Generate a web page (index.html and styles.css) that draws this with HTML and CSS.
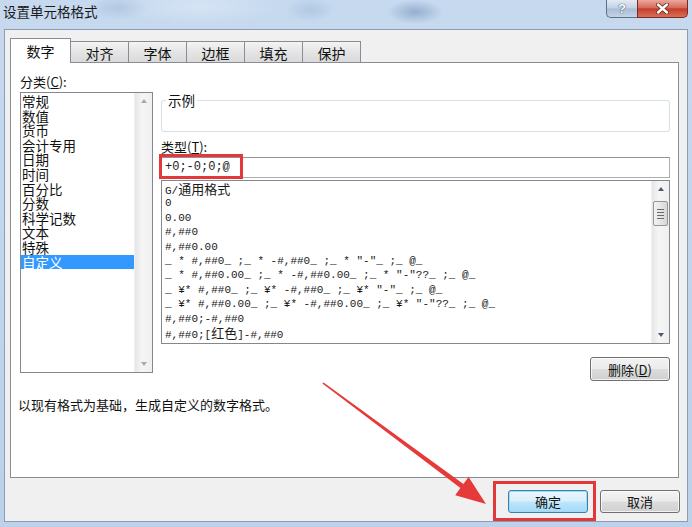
FILE: index.html
```html
<!DOCTYPE html>
<html lang="zh-CN">
<head>
  <meta charset="UTF-8" />
  <title>设置单元格格式</title>
  <link rel="stylesheet" href="styles.css">
</head>
<body>
  <div class="window">
    <div class="titlebar">
      <span class="title">设置单元格格式</span>
      <div class="caption">
        <div class="cap-btn cap-help">?</div>
        <div class="cap-btn cap-close">
          <svg width="13" height="11" viewBox="0 0 13 11">
            <path d="M2 1.5 L11 9.5 M11 1.5 L2 9.5" stroke="#6b231b" stroke-width="4" stroke-linecap="round"/>
            <path d="M2 1.5 L11 9.5 M11 1.5 L2 9.5" stroke="#fff" stroke-width="2.4" stroke-linecap="round"/>
          </svg>
        </div>
      </div>
    </div>

    <div class="client">
      <div class="tabs">
        <div class="tab active">数字</div>
        <div class="tab">对齐</div>
        <div class="tab">字体</div>
        <div class="tab">边框</div>
        <div class="tab">填充</div>
        <div class="tab">保护</div>
      </div>

      <div class="panel">
        <div class="panel-main">
          <div class="col-left">
            <div class="label">分类(<u>C</u>):</div>
            <div class="listbox cat-list">
              <div class="items">
                <div class="item">常规</div>
                <div class="item">数值</div>
                <div class="item">货币</div>
                <div class="item">会计专用</div>
                <div class="item">日期</div>
                <div class="item">时间</div>
                <div class="item">百分比</div>
                <div class="item">分数</div>
                <div class="item">科学记数</div>
                <div class="item">文本</div>
                <div class="item">特殊</div>
                <div class="item selected">自定义</div>
              </div>
              <div class="vscroll disabled">
                <span class="arr arr-up"></span>
                <span class="arr arr-down"></span>
              </div>
            </div>
          </div>

          <div class="col-right">
            <div class="sample">
              <span class="sample-label">示例</span>
            </div>
            <div class="label type-label">类型(<u>T</u>):</div>
            <div class="type-field">
              <div class="type-input">+0;-0;0;@</div>
              <span class="mark mark-type"></span>
            </div>
            <div class="listbox fmt-list">
              <div class="items">
                <div class="fmt">G/<span class="cjk">通用格式</span></div>
                <div class="fmt">0</div>
                <div class="fmt">0.00</div>
                <div class="fmt">#,##0</div>
                <div class="fmt">#,##0.00</div>
                <div class="fmt">_ * #,##0_ ;_ * -#,##0_ ;_ * "-"_ ;_ @_</div>
                <div class="fmt">_ * #,##0.00_ ;_ * -#,##0.00_ ;_ * "-"??_ ;_ @_</div>
                <div class="fmt">_ ¥* #,##0_ ;_ ¥* -#,##0_ ;_ ¥* "-"_ ;_ @_</div>
                <div class="fmt">_ ¥* #,##0.00_ ;_ ¥* -#,##0.00_ ;_ ¥* "-"??_ ;_ @_</div>
                <div class="fmt">#,##0;-#,##0</div>
                <div class="fmt">#,##0;[<span class="cjk">红色</span>]-#,##0</div>
              </div>
              <div class="vscroll">
                <span class="arr arr-up"></span>
                <span class="thumb"><i></i><i></i><i></i><i></i></span>
                <span class="track"></span>
                <span class="arr arr-down"></span>
              </div>
            </div>
            <div class="del-row">
              <button class="btn">删除(<u>D</u>)</button>
            </div>
          </div>
        </div>
        <p class="hint">以现有格式为基础，生成自定义的数字格式。</p>
      </div>

      <div class="footer">
        <div class="ok-wrap">
          <button class="btn default">确定</button>
          <span class="mark mark-ok"></span>
        </div>
        <button class="btn">取消</button>
      </div>
    </div>

    <!-- annotation arrow -->
    <svg class="arrow" width="692" height="527" viewBox="0 0 692 527">
      <polygon points="323.6,382.4 463.4,484.1 468.6,477 486,504 455.2,495.2 460.4,488.1 322.4,383.6" fill="#e63a3a"/>
    </svg>
  </div>
</body>
</html>
```

FILE: styles.css
```css
* {
  box-sizing: border-box;
}

body {
  margin: 0;
  width: 692px;
  height: 527px;
  overflow: hidden;
  background: linear-gradient(180deg, #c6d9ef 0%, #bcd1ea 100%);
  font-family: "Noto Sans CJK SC", "Liberation Sans", sans-serif;
  font-size: 13px;
  color: #111;
}

.window {
  position: relative;
  height: 527px;
  display: flex;
  flex-direction: column;
}

/* title bar */
.titlebar {
  height: 29px;
  flex: none;
  display: flex;
  justify-content: space-between;
  align-items: flex-start;
  padding-left: 3px;
  background:
    radial-gradient(ellipse 28px 12px at 415px 12px, rgba(90, 125, 170, 0.45), transparent),
    radial-gradient(ellipse 24px 12px at 310px 10px, rgba(130, 160, 200, 0.3), transparent),
    radial-gradient(ellipse 30px 12px at 118px 8px, rgba(120, 150, 190, 0.25), transparent),
    radial-gradient(ellipse 80px 20px at 200px 6px, rgba(230, 238, 248, 0.5), transparent);
}

.title {
  margin-top: 2px;
  font-size: 13.5px;
  line-height: 18px;
  color: #1a1a1a;
}

.caption {
  display: flex;
  margin-right: 4px;
}

.cap-btn {
  height: 18px;
  display: flex;
  align-items: center;
  justify-content: center;
  border: 1px solid #5d6e86;
  border-top: none;
}

.cap-help {
  width: 31px;
  border-right: none;
  border-radius: 0 0 0 5px;
  background: linear-gradient(#e2eaf4, #c2d1e4 48%, #a9bcd5 52%, #c4d4e8);
  color: #fff;
  font-weight: bold;
  font-size: 13px;
  font-family: "Liberation Sans", sans-serif;
  text-shadow: 0 0 1px #2f3e52, 0 0 1px #2f3e52;
}

.cap-close {
  width: 51px;
  border-color: #7a2c24;
  border-radius: 0 0 5px 0;
  background: linear-gradient(#eaa99b, #d6685a 46%, #c43d27 52%, #d8705c);
}

/* client area */
.client {
  flex: 1;
  margin: 0 4px 5px 4px;
  border: 1px solid #8d9cb2;
  background: #f0f0f0;
  display: flex;
  flex-direction: column;
}

.tabs {
  display: flex;
  align-items: flex-end;
  height: 24px;
  margin: 8px 0 0 5px;
}

.tab {
  width: 59px;
  height: 21px;
  margin-left: -1px;
  border: 1px solid #898c95;
  border-bottom: none;
  background: linear-gradient(#f4f4f4, #e4e4e4 50%, #dadada);
  display: flex;
  align-items: center;
  justify-content: center;
  font-size: 14px;
  line-height: 1;
  padding-top: 1px;
}

.tab.active {
  width: 61px;
  height: 25px;
  margin-left: 0;
  margin-bottom: -1px;
  background: #fff;
  position: relative;
  z-index: 1;
  padding-top: 0;
}

.panel {
  height: 416px;
  margin: 0 8px 0 5px;
  border: 1px solid #898c95;
  background: #fff;
  padding: 10px 8px 0 9px;
}

.panel-main {
  display: grid;
  grid-template-columns: 133px 1fr;
  column-gap: 8px;
  align-items: start;
}

.label {
  font-size: 13px;
  line-height: 17px;
  margin-bottom: 2px;
}

/* list boxes */
.listbox {
  display: flex;
  border: 1px solid #828790;
  background: #fff;
}

.items {
  flex: 1;
}

.cat-list {
  height: 281px;
}

.cat-list .items {
  padding-top: 1px;
}

.item {
  height: 14.6px;
  line-height: 14.6px;
  font-size: 13.5px;
  padding-left: 1px;
  white-space: nowrap;
}

.item.selected {
  background: #3399ff;
  color: #fff;
}

.vscroll {
  width: 18px;
  display: flex;
  flex-direction: column;
  align-items: center;
  background: linear-gradient(90deg, #e6e6e6, #f5f5f5 40%, #f0f0f0);
  border-left: 1px solid #f0f0f0;
  padding: 6px 0;
  justify-content: space-between;
}

.arr {
  width: 0;
  height: 0;
  border-left: 3.5px solid transparent;
  border-right: 3.5px solid transparent;
}

.arr-up {
  border-bottom: 4px solid #4b5a74;
}

.arr-down {
  border-top: 4px solid #4b5a74;
}

.vscroll.disabled .arr-up {
  border-bottom-color: #a9a9a9;
}

.vscroll.disabled .arr-down {
  border-top-color: #a9a9a9;
}

.thumb {
  width: 15px;
  height: 25px;
  margin-top: 10px;
  border: 1px solid #959595;
  border-radius: 2px;
  background: linear-gradient(90deg, #f2f2f2, #e6e6e6 50%, #d6d6d6);
  display: flex;
  flex-direction: column;
  align-items: center;
  justify-content: center;
  gap: 2px;
}

.thumb i {
  width: 7px;
  height: 1px;
  background: #6a6a6a;
}

.track {
  flex: 1;
}

/* right column */
.sample {
  height: 32px;
  margin-top: 27px;
  border: 1px solid #d5dfe5;
  border-radius: 3px;
}

.sample-label {
  display: table;
  margin: -9px 0 0 4px;
  padding: 0 2px;
  background: #fff;
  font-size: 13.5px;
  line-height: 16px;
}

.type-label {
  margin-top: 6px;
}

.type-field {
  position: relative;
}

.type-input {
  height: 21px;
  border: 1px solid #abadb3;
  border-top-color: #8f939c;
  padding-left: 3px;
  font-family: "Liberation Mono", monospace;
  font-size: 12px;
  line-height: 19px;
  color: #222;
}

.mark {
  position: absolute;
  border: 3px solid #e2383a;
  pointer-events: none;
}

.mark-type {
  left: -2px;
  top: -3px;
  width: 84px;
  height: 25px;
}

.fmt-list {
  height: 164px;
  margin-top: 2px;
}

.fmt-list .items {
  padding: 1px 0 0 3px;
}

.fmt {
  height: 14.4px;
  line-height: 14.4px;
  font-family: "Liberation Mono", "Noto Sans CJK SC", monospace;
  font-size: 11px;
  color: #1a1a1a;
  white-space: pre;
}

.fmt .cjk {
  font-family: "Noto Sans CJK SC", sans-serif;
  font-size: 13px;
}

.del-row {
  display: flex;
  justify-content: flex-end;
  margin-top: 13px;
}

/* buttons */
.btn {
  width: 80px;
  height: 24px;
  border: 1px solid #707070;
  border-radius: 3px;
  background: linear-gradient(#f3f3f3, #ebebeb 48%, #dcdcdc 52%, #d0d0d0);
  box-shadow: inset 0 0 0 1px rgba(255, 255, 255, 0.7);
  font-family: inherit;
  font-size: 13px;
  color: #111;
  padding: 0;
}

.btn.default {
  border-color: #3c7fb1;
  box-shadow: inset 0 0 0 1px #9edbf5;
  background: linear-gradient(#eaf6fd, #d9f0fc 48%, #bee6fd 52%, #a7d9f5);
}

.hint {
  margin: 15px 0 0 -2px;
  font-size: 13px;
  line-height: 18px;
}

.footer {
  flex: 1;
  display: flex;
  justify-content: flex-end;
  align-items: flex-start;
  gap: 12px;
  padding: 12px 7px 0 0;
}

.footer .btn {
  height: 23px;
}

.ok-wrap {
  position: relative;
  display: flex;
}

.mark-ok {
  left: -15px;
  top: -9px;
  width: 103px;
  height: 40px;
}

.arrow {
  position: absolute;
  left: 0;
  top: 0;
  pointer-events: none;
}
```
